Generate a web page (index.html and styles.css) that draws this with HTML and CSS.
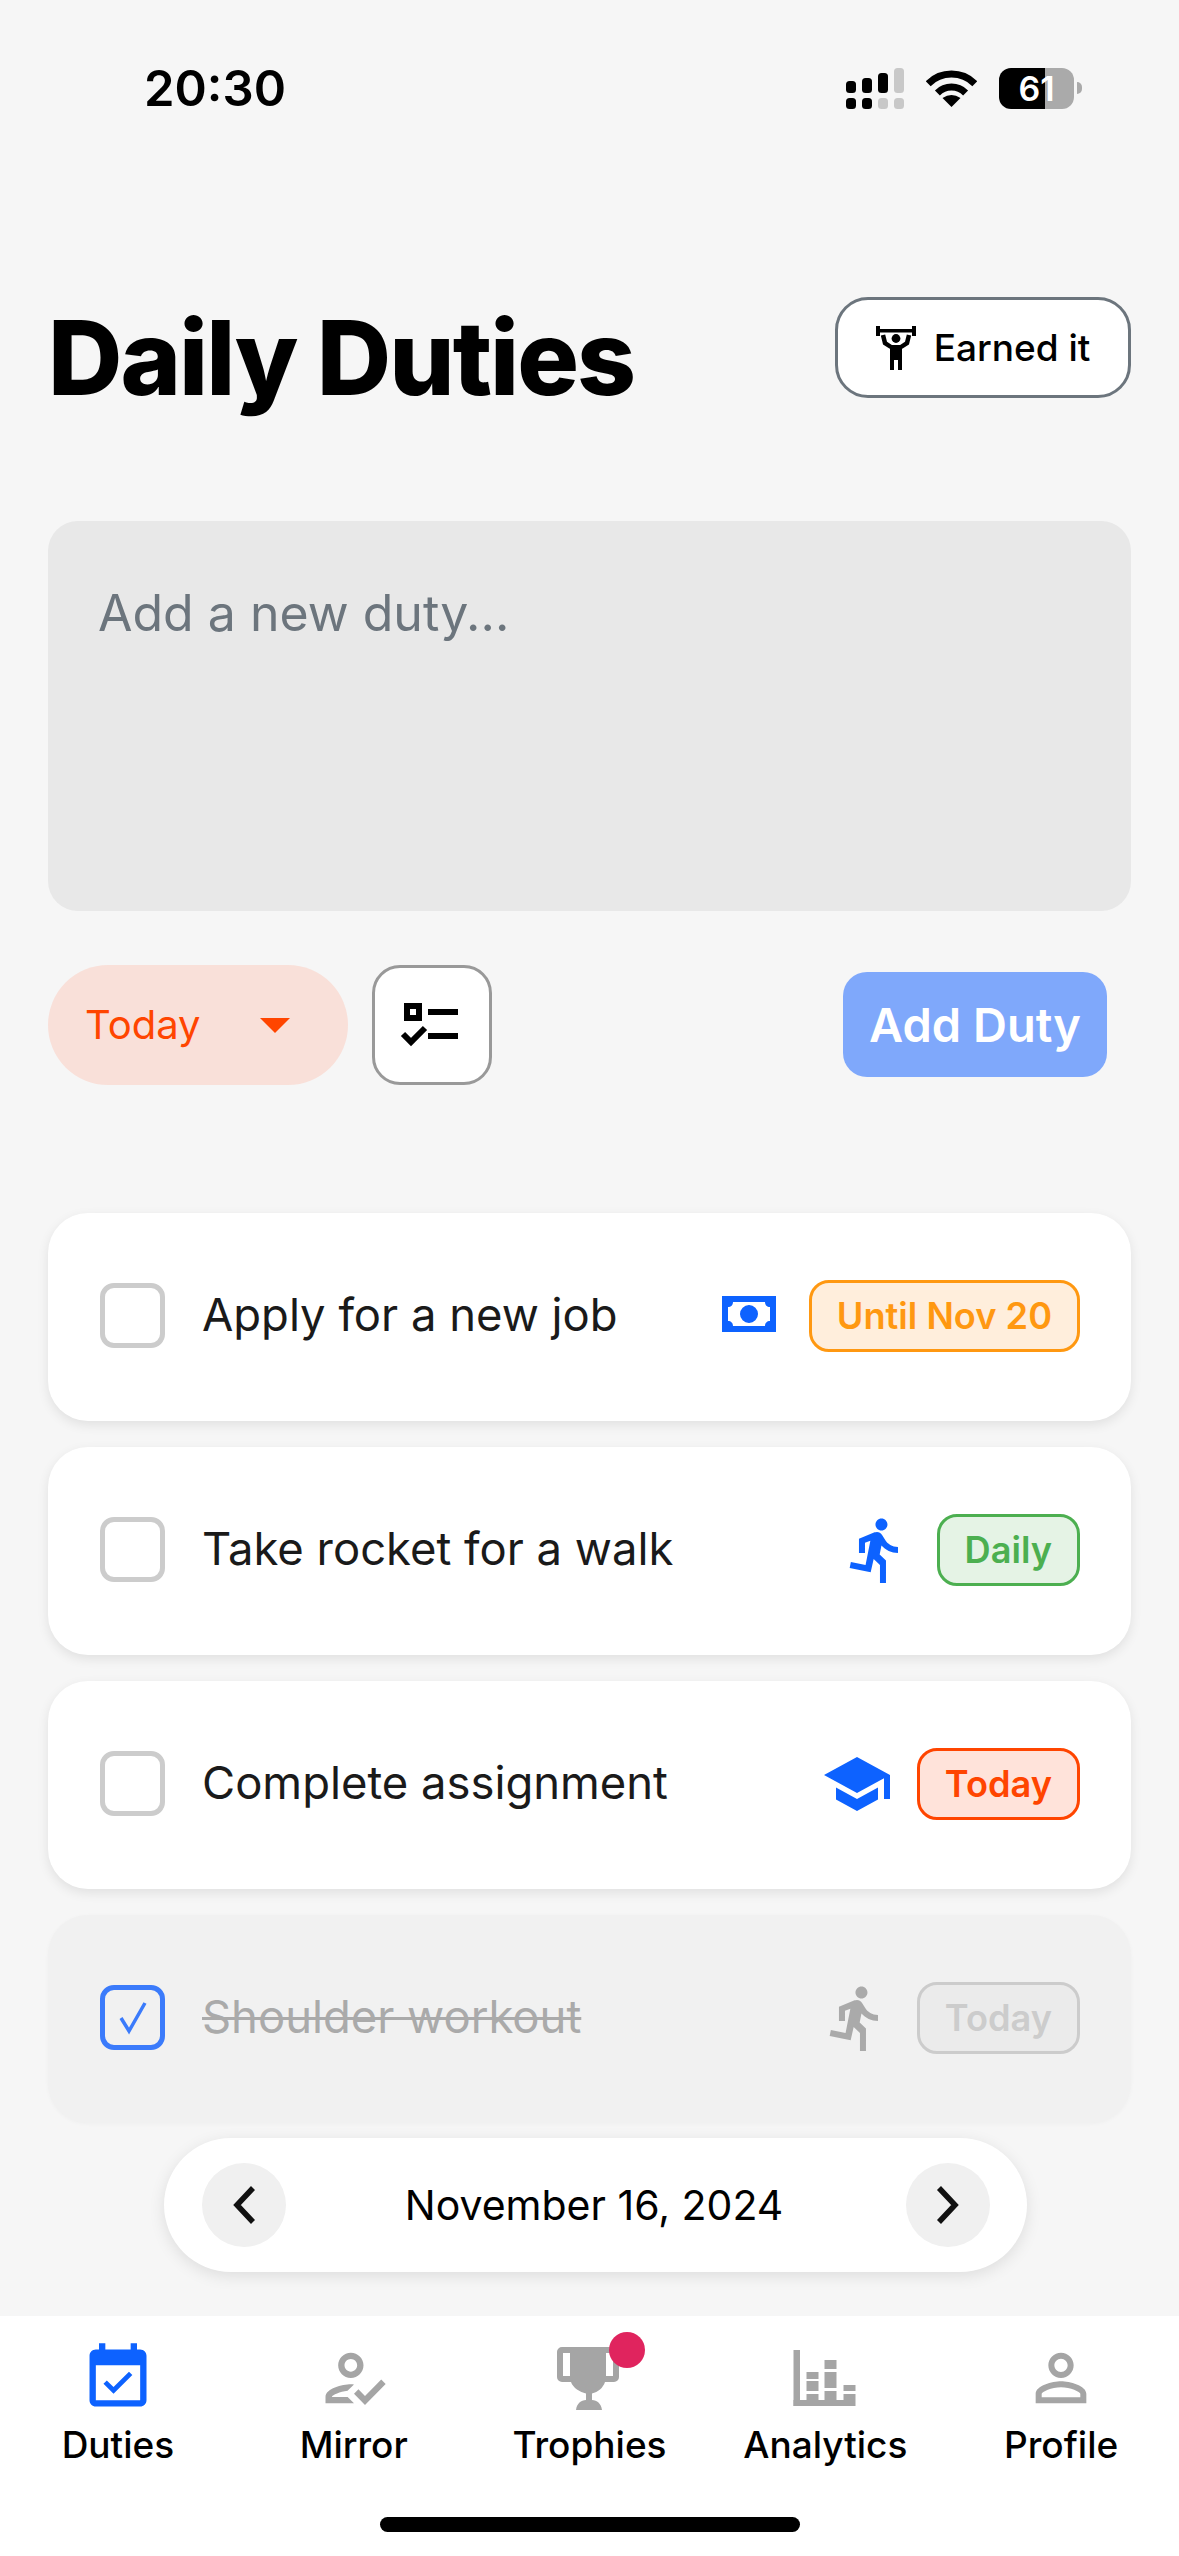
FILE: index.html
```html
<!DOCTYPE html>
<html lang="en">

<head>
    <meta charset="UTF-8" />
    <title>Daily Duties</title>
    <link rel="stylesheet" href="styles.css">
</head>

<body>

    <!-- Status bar -->
    <div class="status-bar">
        <span class="time">20:30</span>
        <div class="status-icons">
            <svg width="58" height="41" viewBox="0 0 58 41">
                <rect x="0" y="13" width="10" height="12" rx="3.5" />
                <rect x="16" y="10" width="10" height="15" rx="3.5" />
                <rect x="32" y="5" width="10" height="20" rx="3.5" />
                <rect x="48" y="0" width="10" height="25" rx="3.5" fill="#c8c8c8" />
                <rect x="0" y="30" width="10" height="11" rx="3.5" />
                <rect x="16" y="30" width="10" height="11" rx="3.5" />
                <rect x="32" y="30" width="10" height="11" rx="3.5" fill="#c8c8c8" />
                <rect x="48" y="30" width="10" height="11" rx="3.5" fill="#c8c8c8" />
            </svg>
            <svg width="51" height="37" viewBox="0 0 51 37">
                <path d="M2.2 13.7A33 33 0 0 1 48.8 13.7M11.4 22.9A20 20 0 0 1 39.6 22.9" fill="none" stroke="#000" stroke-width="7" />
                <path d="M25.5 37L16.5 28Q25.5 22 34.5 28Z" />
            </svg>
            <div class="battery-wrap">
                <div class="battery">61</div>
                <div class="battery-tip"></div>
            </div>
        </div>
    </div>

    <div class="page">
        <!-- Header -->
        <div class="header">
            <h1>Daily Duties</h1>
            <button class="earned-btn">
                <svg width="40" height="44" viewBox="0 0 40 44">
                    <rect x="0" y="3" width="40" height="3.5" />
                    <rect x="0" y="0" width="4" height="10" />
                    <rect x="36" y="0" width="4" height="10" />
                    <circle cx="20" cy="12.5" r="4.4" />
                    <path d="M7 9L9 17L15 21M33 9L31 17L25 21" fill="none" stroke="#000" stroke-width="4.5" />
                    <path d="M14 19H26V44H22V34H18V44H14Z" />
                </svg>
                Earned it
            </button>
        </div>

        <!-- New duty form -->
        <textarea class="duty-input" placeholder="Add a new duty..."></textarea>

        <div class="controls">
            <div class="period-select">
                <span>Today</span>
                <svg width="30" height="15" viewBox="0 0 30 15"><path d="M0 0H30L15 15Z" /></svg>
            </div>
            <button class="list-btn">
                <svg width="64" height="50" viewBox="0 0 64 50">
                    <path fill-rule="evenodd" d="M4 3H22V21H4ZM10 9V15H16V9Z" />
                    <rect x="28" y="9" width="30" height="6" />
                    <rect x="28" y="33" width="30" height="6" />
                    <path d="M3 34L11 42L25 28" fill="none" stroke="#000" stroke-width="6" />
                </svg>
            </button>
            <button class="add-btn">Add Duty</button>
        </div>

        <!-- Duties -->
        <div class="task-list">
            <div class="task">
                <div class="checkbox"></div>
                <span class="task-name">Apply for a new job</span>
                <svg class="task-icon" width="72" height="72" viewBox="0 0 72 72">
                    <path fill-rule="evenodd" d="M9 16H63V52H9ZM20 22C20 25 18 27 15 27V41C18 41 20 43 20 46H52C52 43 54 41 57 41V27C54 27 52 25 52 22ZM36 25A9 9 0 1 1 36 43A9 9 0 1 1 36 25Z" />
                </svg>
                <span class="badge badge-until">Until Nov 20</span>
            </div>
            <div class="task">
                <div class="checkbox"></div>
                <span class="task-name">Take rocket for a walk</span>
                <svg class="task-icon" width="72" height="72" viewBox="0 0 24 24">
                    <path d="M13.49 5.48c1.1 0 2-.9 2-2s-.9-2-2-2-2 .9-2 2 .9 2 2 2zm-3.6 13.9l1-4.4 2.1 2v6h2v-7.5l-2.1-2 .6-3c1.3 1.5 3.3 2.5 5.5 2.5v-2c-1.9 0-3.5-1-4.3-2.4l-1-1.6c-.4-.6-1-1-1.7-1-.3 0-.5.1-.8.1l-5.2 2.2v4.7h2v-3.4l1.8-.7-1.6 8.1-4.9-1-.4 2 7 1.4z" />
                </svg>
                <span class="badge badge-daily">Daily</span>
            </div>
            <div class="task">
                <div class="checkbox"></div>
                <span class="task-name">Complete assignment</span>
                <svg class="task-icon" width="72" height="72" viewBox="0 0 24 24">
                    <path d="M5 13.18v4L12 21l7-3.82v-4L12 17l-7-3.82zM12 3L1 9l11 6 9-4.91V17h2V9L12 3z" />
                </svg>
                <span class="badge badge-today">Today</span>
            </div>
            <div class="task task-done">
                <div class="checkbox">
                    <svg width="30" height="34" viewBox="0 0 30 34"><path d="M3 17L11 30L27 2" fill="none" stroke="#3b7bfb" stroke-width="3.5" /></svg>
                </div>
                <span class="task-name">Shoulder workout</span>
                <svg class="task-icon" width="72" height="72" viewBox="0 0 24 24">
                    <path d="M13.49 5.48c1.1 0 2-.9 2-2s-.9-2-2-2-2 .9-2 2 .9 2 2 2zm-3.6 13.9l1-4.4 2.1 2v6h2v-7.5l-2.1-2 .6-3c1.3 1.5 3.3 2.5 5.5 2.5v-2c-1.9 0-3.5-1-4.3-2.4l-1-1.6c-.4-.6-1-1-1.7-1-.3 0-.5.1-.8.1l-5.2 2.2v4.7h2v-3.4l1.8-.7-1.6 8.1-4.9-1-.4 2 7 1.4z" />
                </svg>
                <span class="badge">Today</span>
            </div>
        </div>

        <!-- Date switcher -->
        <div class="date-nav">
            <button class="date-btn">
                <svg width="24" height="38" viewBox="0 0 24 38"><path d="M21 2L5 19L21 36" fill="none" stroke="#111" stroke-width="5.5" /></svg>
            </button>
            <span class="date-text">November 16, 2024</span>
            <button class="date-btn">
                <svg width="24" height="38" viewBox="0 0 24 38"><path d="M3 2L19 19L3 36" fill="none" stroke="#111" stroke-width="5.5" /></svg>
            </button>
        </div>
    </div>

    <!-- Tab bar -->
    <div class="tab-bar">
        <div class="tabs">
            <div class="tab active">
                <div class="tab-icon">
                    <svg width="76" height="76" viewBox="0 0 24 24">
                        <path d="M16.53 11.06L15.47 10l-4.88 4.88-2.12-2.12-1.06 1.06L10.59 17l5.94-5.94zM19 3h-1V1h-2v2H8V1H6v2H5c-1.11 0-1.99.9-1.99 2L3 19c0 1.1.89 2 2 2h14c1.1 0 2-.9 2-2V5c0-1.1-.9-2-2-2zm0 16H5V8h14v11z" />
                    </svg>
                </div>
                <span>Duties</span>
            </div>
            <div class="tab">
                <div class="tab-icon">
                    <svg width="76" height="76" viewBox="0 0 24 24">
                        <path d="M11 12c2.21 0 4-1.79 4-4s-1.79-4-4-4-4 1.79-4 4 1.79 4 4 4zm0-6c1.1 0 2 .9 2 2s-.9 2-2 2-2-.9-2-2 .9-2 2-2zM5 18c.2-.63 2.57-1.68 4.96-1.94l2.04-2c-.39-.04-.68-.06-1-.06-2.67 0-8 1.34-8 4v2h9l-2-2H5zm15.6-5.5l-5.13 5.17-2.07-2.08L12 17l3.47 3.5L22 13.91z" />
                    </svg>
                </div>
                <span>Mirror</span>
            </div>
            <div class="tab">
                <div class="tab-icon">
                    <svg width="76" height="76" viewBox="-6 -7 76 76">
                        <path fill-rule="evenodd" d="M5 0H57A5 5 0 0 1 62 5V30A5 5 0 0 1 57 35H48C46 41 41 45 35 46.5V53C40 53.5 44 56 45 63H19C20 56 24 53.5 29 53V46.5C23 45 16 41 14 35H5A5 5 0 0 1 0 30V5A5 5 0 0 1 5 0ZM6 6V29H13V6ZM49 6V29H56V6Z" />
                    </svg>
                    <div class="dot"></div>
                </div>
                <span>Trophies</span>
            </div>
            <div class="tab">
                <div class="tab-icon">
                    <svg width="76" height="76" viewBox="-6.5 -10 76 76">
                        <rect x="0" y="0" width="6.5" height="56" />
                        <rect x="0" y="50" width="62" height="6" />
                        <rect x="13" y="22" width="12" height="7" />
                        <rect x="13" y="31" width="12" height="10" />
                        <rect x="13" y="44" width="12" height="6" />
                        <rect x="31" y="10" width="12" height="9" />
                        <rect x="31" y="22" width="12" height="16" />
                        <rect x="31" y="41" width="12" height="9" />
                        <rect x="50" y="35" width="12" height="6" />
                        <rect x="50" y="44" width="12" height="6" />
                    </svg>
                </div>
                <span>Analytics</span>
            </div>
            <div class="tab">
                <div class="tab-icon">
                    <svg width="76" height="76" viewBox="0 0 24 24">
                        <path d="M12 5.9c1.16 0 2.1.94 2.1 2.1s-.94 2.1-2.1 2.1S9.9 9.16 9.9 8s.94-2.1 2.1-2.1m0 9c2.97 0 6.1 1.46 6.1 2.1v1.1H5.9V17c0-.64 3.13-2.1 6.1-2.1M12 4C9.79 4 8 5.79 8 8s1.79 4 4 4 4-1.79 4-4-1.79-4-4-4zm0 9c-2.67 0-8 1.34-8 4v3h16v-3c0-2.66-5.33-4-8-4z" />
                    </svg>
                </div>
                <span>Profile</span>
            </div>
        </div>
        <div class="home-indicator"></div>
    </div>

</body>

</html>
```

FILE: styles.css
```css
* {
    box-sizing: border-box;
}

body {
    margin: 0;
    height: 2556px;
    display: flex;
    flex-direction: column;
    overflow: hidden;
    font-family: Inter, "Noto Sans", sans-serif;
    background: #f6f6f6;
    color: #000;
}

button {
    font-family: inherit;
    cursor: pointer;
}

/* Status bar */
.status-bar {
    height: 176px;
    display: flex;
    justify-content: space-between;
    align-items: center;
    padding: 0 97px 0 144px;
}

.time {
    font-size: 49px;
    font-weight: 600;
}

.status-icons {
    display: flex;
    align-items: center;
    gap: 22px;
}

.battery-wrap {
    display: flex;
    align-items: center;
    gap: 3px;
}

.battery {
    width: 75px;
    height: 41px;
    border-radius: 12px;
    background: linear-gradient(to right, #000 61%, #aaa 61%);
    color: #fff;
    font-size: 34px;
    font-weight: 600;
    line-height: 41px;
    text-align: center;
}

.battery-tip {
    width: 5px;
    height: 12px;
    background: #aaa;
    border-radius: 0 6px 6px 0;
}

/* Main column */
.page {
    padding: 0 48px;
}

.header {
    height: 101px;
    margin-top: 121px;
    display: flex;
    justify-content: space-between;
    align-items: center;
}

h1 {
    margin: 20px 0 0 0;
    font-size: 103px;
    font-weight: 800;
    line-height: 100px;
    letter-spacing: -2px;
}

.earned-btn {
    width: 296px;
    height: 101px;
    display: flex;
    align-items: center;
    justify-content: center;
    gap: 18px;
    background: #fff;
    border: 3px solid #6c757d;
    border-radius: 33px;
    color: #000;
    font-size: 37px;
    font-weight: 500;
}

.duty-input {
    display: block;
    width: 100%;
    height: 390px;
    margin-top: 123px;
    padding: 60px 50px;
    background: #e8e8e8;
    border: none;
    border-radius: 30px;
    font-family: inherit;
    font-size: 50px;
    line-height: 64px;
    resize: none;
    outline: none;
}

.duty-input::placeholder {
    color: #6c757d;
    opacity: 1;
}

.controls {
    height: 120px;
    margin-top: 54px;
    display: flex;
    align-items: center;
}

.period-select {
    width: 300px;
    height: 120px;
    display: flex;
    align-items: center;
    justify-content: space-between;
    padding: 0 58px 0 37px;
    background: #f9e0d9;
    border-radius: 60px;
    color: #ff4500;
    font-size: 40px;
}

.period-select span {
    margin-bottom: 2px;
}

.period-select svg {
    fill: #ff4500;
}

.list-btn {
    width: 120px;
    height: 120px;
    margin-left: 24px;
    padding: 0;
    display: flex;
    align-items: center;
    justify-content: center;
    background: #fff;
    border: 3px solid #999;
    border-radius: 28px;
}

.add-btn {
    width: 264px;
    height: 105px;
    margin: 0 24px 2px auto;
    padding: 0;
    background: #7fa8fb;
    border: none;
    border-radius: 24px;
    color: #fff;
    font-size: 47px;
    font-weight: 600;
}

/* Duties */
.task-list {
    margin-top: 128px;
    display: flex;
    flex-direction: column;
    gap: 26px;
}

.task {
    height: 208px;
    display: flex;
    align-items: center;
    padding: 0 51px 3px 52px;
    background: #fff;
    border-radius: 40px;
    box-shadow: 0 4px 12px rgba(0, 0, 0, 0.09);
}

.checkbox {
    width: 65px;
    height: 65px;
    display: flex;
    align-items: center;
    justify-content: center;
    flex-shrink: 0;
    border: 5px solid #ccc;
    border-radius: 14px;
}

.task-name {
    flex: 1;
    margin: 0 0 2px 37px;
    font-size: 45.4px;
    color: #1a1a1a;
}

.task-icon {
    fill: #0d62ff;
    flex-shrink: 0;
}

.badge {
    height: 72px;
    margin-left: 24px;
    padding: 0 25px;
    display: flex;
    align-items: center;
    background: #ebebeb;
    border: 3px solid #ccc;
    border-radius: 20px;
    color: #ccc;
    font-size: 36.2px;
    font-weight: 600;
}

.badge-until {
    background: #ffeedc;
    border-color: #ff9811;
    color: #ff9811;
}

.badge-daily {
    background: #e5f3e5;
    border-color: #4caf50;
    color: #4caf50;
}

.badge-today {
    background: #ffe3da;
    border-color: #ff4500;
    color: #ff4500;
}

.task-done {
    background: #f1f1f1;
    box-shadow: 0 1px 4px rgba(0, 0, 0, 0.03);
}

.task-done .checkbox {
    border-color: #3b7bfb;
}

.task-done .task-name {
    color: #aaa;
    text-decoration: line-through;
    text-decoration-thickness: 3px;
}

.task-done .task-icon {
    fill: #aaa;
}

/* Date switcher */
.date-nav {
    width: 863px;
    height: 134px;
    margin: 15px 0 0 116px;
    padding: 0 37px 0 38px;
    display: flex;
    align-items: center;
    justify-content: space-between;
    background: #fff;
    border-radius: 67px;
    box-shadow: 0 4px 16px rgba(0, 0, 0, 0.1);
}

.date-btn {
    width: 84px;
    height: 84px;
    padding: 0;
    display: flex;
    align-items: center;
    justify-content: center;
    background: #f0f0f0;
    border: none;
    border-radius: 50%;
}

.date-text {
    margin-right: 4px;
    font-size: 41px;
}

/* Tab bar */
.tab-bar {
    height: 240px;
    margin-top: auto;
    background: #fff;
}

.tabs {
    height: 201px;
    padding-top: 24px;
    display: flex;
}

.tab {
    flex: 1;
    display: flex;
    flex-direction: column;
    align-items: center;
    font-size: 37px;
    font-weight: 500;
    line-height: 44px;
}

.tab-icon {
    position: relative;
    width: 76px;
    height: 76px;
    margin-bottom: 7px;
    fill: #a5a5a5;
}

.tab.active .tab-icon {
    fill: #0d62ff;
}

.dot {
    position: absolute;
    left: 58px;
    top: -8px;
    width: 36px;
    height: 36px;
    background: #e0245e;
    border-radius: 50%;
}

.home-indicator {
    width: 420px;
    height: 15px;
    margin: 0 auto;
    background: #000;
    border-radius: 8px;
}
```
